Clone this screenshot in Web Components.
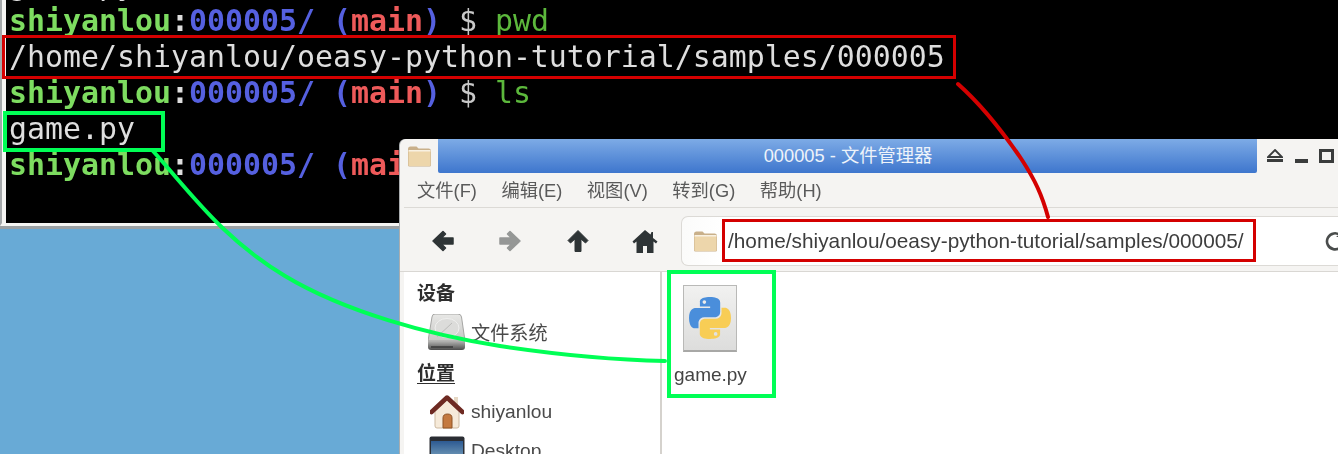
<!DOCTYPE html>
<html lang="zh">
<head>
<meta charset="utf-8">
<title>000005</title>
<style>
  html, body { margin: 0; height: 100%; overflow: hidden; }
  body { background: #68aad6; font-family: "Liberation Sans", "Noto Sans CJK SC", sans-serif; }
</style>
</head>
<body>
<desktop-screen>
  <terminal-window>
    <term-line plain>game.py</term-line>
    <term-line cmd="pwd"></term-line>
    <term-line plain>/home/shiyanlou/oeasy-python-tutorial/samples/000005</term-line>
    <term-line cmd="ls"></term-line>
    <term-line plain>game.py</term-line>
    <term-line></term-line>
  </terminal-window>

  <file-manager>
    <fm-section>设备</fm-section>
    <fm-place icon="drive">文件系统</fm-place>
    <fm-section underline>位置</fm-section>
    <fm-place icon="home">shiyanlou</fm-place>
    <fm-place icon="desktop">Desktop</fm-place>
    <fm-file slot="files">game.py</fm-file>
  </file-manager>

  <note-layer></note-layer>
</desktop-screen>

<script>
const ICONS = {
  folder: `<svg viewBox="0 0 25 21" width="25" height="21"><path d="M1 3Q1 .5 3.500 .5h6l2 2h10q2.500 0 2.500 2.500V19q0 1.500-1.500 1.500H2.500Q1 20.500 1 19z" fill="#c9b08a"/><path d="M1.500 5h22v14q0 1-1 1h-20q-1 0-1-1z" fill="#edd6ab"/><path d="M1.500 4h22v1.500h-22z" fill="#f8f1e2"/></svg>`,
  back: `<svg viewBox="0 0 24 24" width="24" height="24"><path d="M12 2.500 2 12l10 9.500 2.500-2.500-4-4H22V9H10.500l4-4z" fill="#2e3436" stroke="#2e3436" stroke-width="1.500" stroke-linejoin="round"/></svg>`,
  forward: `<svg viewBox="0 0 24 24" width="24" height="24"><path d="M12 2.500 22 12l-10 9.500-2.500-2.500 4-4H2V9h11.500l-4-4z" fill="#959796" stroke="#959796" stroke-width="1.500" stroke-linejoin="round"/></svg>`,
  up: `<svg viewBox="0 0 24 24" width="24" height="24"><path d="M12 1.500 2 11.500 4.500 14l4.500-4V22.500h6V10l4.500 4 2.500-2.500z" fill="#2e3436" stroke="#2e3436" stroke-linejoin="round"/></svg>`,
  house: `<svg viewBox="0 0 26 24" width="26" height="24"><path d="M13 1 0.500 12.500 2 14.500l2.500-2V24h6.500v-7h4v7h6.500V12.500l2.500 2 1.500-2L21 9V3h-1.500L18.500 5.500z" fill="#2e3436"/></svg>`,
  reload: `<svg viewBox="0 0 20 20" width="20" height="20"><path d="M15.500 4.500A8 8 0 1 0 18 10" fill="none" stroke="#4a4d4c" stroke-width="2.600"/><path d="M11 6h8V0z" fill="#4a4d4c"/></svg>`,
  drive: `<svg viewBox="0 0 37 36" width="37" height="36"><defs><linearGradient id="d" x1="0" y1="0" x2="0" y2="1"><stop offset="0" stop-color="#e8e8e6"/><stop offset="1" stop-color="#c8c8c6"/></linearGradient><linearGradient id="b" x1="0" y1="0" x2="0" y2="1"><stop offset="0" stop-color="#b5b5b3"/><stop offset="1" stop-color="#4c4c4c"/></linearGradient></defs><path d="M4 3q.3-3 3-3h23q3 0 3.500 3L37 27H0z" fill="url(#d)" stroke="#a5a5a3"/><ellipse cx="19" cy="14" rx="12" ry="9.500" fill="#dcdcda" stroke="#f0f0ef"/><path d="M9 23 24 9" stroke="#bbbbb9" fill="none"/><path d="M0 27h37v6q0 3-3 3H3q-3 0-3-3z" fill="url(#b)"/><path d="M3 33h22" stroke="#3a3a3a" stroke-width="1.500"/></svg>`,
  home: `<svg viewBox="0 0 34 34" width="34" height="34"><path d="M5 16 17 5l12 11v15q0 2-2 2H7q-2 0-2-2z" fill="#f6ead9" stroke="#cdb9a0"/><path d="M24 2h4v10h-4z" fill="#e6d8c4"/><path d="M1.500 17 17 2.500 32.500 17" fill="none" stroke="#6e2a22" stroke-width="4.500" stroke-linecap="round" stroke-linejoin="round"/><path d="M13 33V23q0-4 4.500-4t4.500 4v10z" fill="#c4793f" stroke="#8f5427"/></svg>`,
  monitor: `<svg viewBox="0 0 36 30" width="36" height="30"><defs><linearGradient id="m" x1="0" y1="0" x2="0" y2="1"><stop offset="0" stop-color="#2d5a92"/><stop offset="1" stop-color="#8fb6c8"/></linearGradient></defs><rect x=".5" y=".5" width="35" height="29" rx="2" fill="#2a2d33"/><rect x="2" y="5" width="32" height="24" fill="url(#m)"/></svg>`,
  python: `<svg viewBox="0 0 110 110" width="42" height="42"><path fill-rule="evenodd" fill="#4a8edb" d="M54.900 0C26.800 0 28.600 12.200 28.600 12.200l0 12.600h26.800v3.800H17.900S0 26.600 0 54.800c0 28.200 15.600 27.200 15.600 27.200h9.300V68.900s-.5-15.600 15.400-15.600h26.500s14.900.2 14.900-14.400V14.700S84 0 54.900 0zM40.200 8.500a4.800 4.800 0 1 1 0 9.600 4.800 4.800 0 0 1 0-9.600z"/><path fill-rule="evenodd" fill="#f8cd55" transform="rotate(180 55 55)" d="M54.900 0C26.800 0 28.600 12.200 28.600 12.200l0 12.600h26.800v3.800H17.900S0 26.600 0 54.800c0 28.200 15.600 27.200 15.600 27.200h9.300V68.900s-.5-15.600 15.400-15.600h26.500s14.900.2 14.900-14.400V14.700S84 0 54.900 0zM40.200 8.500a4.800 4.800 0 1 1 0 9.600 4.800 4.800 0 0 1 0-9.600z"/></svg>`,
};

class BaseElement extends HTMLElement {
  constructor(html) {
    super();
    const template = document.createElement("template");
    template.innerHTML = html;
    this.attachShadow({ mode: "open" }).appendChild(template.content.cloneNode(true));
  }
}

class DesktopScreen extends BaseElement {
  constructor() {
    super(`
<style>
  :host { display: block; position: relative; width: 1338px; height: 454px; overflow: hidden; background: #68aad6; }
</style>
<slot></slot>`);
  }
}

class TerminalWindow extends BaseElement {
  constructor() {
    super(`
<style>
  :host {
    display: block; position: absolute; left: 0; top: -36px; width: 1338px; height: 262px;
    box-sizing: border-box; background: #000; padding: 3px 0 0 7px;
    border-left: 2px solid #a4a8aa; border-bottom: 3px solid #f4f4f2;
    box-shadow: inset 4px 0 0 #f4f4f2, 0 3px 0 #9aa0a3;
    filter: blur(.5px);
  }
</style>
<slot></slot>`);
  }
}

class TermLine extends BaseElement {
  constructor() {
    super(`
<style>
  :host {
    display: block; height: 36px; overflow: hidden;
    font: 29.9px/36px "DejaVu Sans Mono", monospace; color: #dedede;
  }
  #out { white-space: pre; }
  .user { color: #7ddc60; font-weight: bold; }
  .dir { color: #5560e0; font-weight: bold; }
  .branch { color: #ee5a5a; font-weight: bold; }
  .paren { color: #5560e0; font-weight: bold; }
  .cmd { color: #5cb83c; }
  .sign { color: #c8c8c8; }
  .colon { color: #dedede; font-weight: bold; }
</style>
<span id="out"></span>`);
  }
  connectedCallback() {
    const out = this.shadowRoot.getElementById("out");
    if (this.hasAttribute("plain")) {
      out.textContent = this.textContent;
      return;
    }
    const cmd = this.getAttribute("cmd");
    out.innerHTML = `<span class="user">shiyanlou</span><span class="colon">:</span><span class="dir">000005/</span> <span class="paren">(</span><span class="branch">main</span><span class="paren">)</span> <span class="sign">$</span> ${cmd ? `<span class="cmd">${cmd}</span>` : ""}`;
  }
}

class FileManager extends BaseElement {
  constructor() {
    super(`
<style>
  :host {
    display: flex; flex-direction: column; position: absolute; left: 400px; top: 139px;
    width: 960px; height: 330px; background: #f5f4f2; border-radius: 6px 0 0 0;
    color: #4a4a4a; filter: blur(.45px); box-shadow: -1px 0 0 #a9adaf;
  }
  .title { display: flex; height: 34px; flex: none; }
  .appicon { width: 38px; display: flex; align-items: center; padding-left: 7px; box-sizing: border-box; }
  .caption {
    width: 819px; display: flex; align-items: center; justify-content: center; padding: 0 0 4px 1px; box-sizing: border-box;
    background: linear-gradient(#7dabe6, #3e76cd); border-radius: 0 0 2px 2px;
    color: #eef3fa; font: 18.3px "Liberation Sans", "Noto Sans CJK SC", sans-serif;
  }
  .controls { display: flex; align-items: center; gap: 10px; padding: 0 0 1px 10px; }
  .menu {
    display: flex; gap: 24.500px; height: 35px; align-items: center; flex: none;
    margin-left: 4px; padding: 0 0 3px 13px; box-sizing: border-box; border-bottom: 1px solid #dcdad6;
    font: 18.3px "Liberation Sans", "Noto Sans CJK SC", sans-serif; color: #5a5a5a;
  }
  .tools { display: flex; flex: none; height: 64px; box-sizing: border-box; padding: 8px 0 5px 9px; border-bottom: 1px solid #d9d7d3; }
  .btn { width: 67.500px; display: flex; align-items: center; justify-content: center; }
  .location {
    flex: 1; margin-left: 2px; background: linear-gradient(90deg, #fbfbfa 0, #fff 40px); border: 1px solid #dcdad6; border-right: 0;
    border-radius: 7px 0 0 7px; display: flex; align-items: center; padding-left: 11px; gap: 10px;
    font: 20.800px "Liberation Sans", sans-serif; color: #3d3d3d; white-space: nowrap;
  }
  .location .path { width: 587px; }
  .body { display: flex; flex: 1; min-height: 0; }
  .side { width: 256px; flex: none; margin-left: 4px; background: #fff; border-right: 2px solid #d5d2cd; overflow: hidden; }
  .files { flex: 1; background: #fff; padding: 13px 0 0 12px; display: flex; align-items: flex-start; }
</style>
<div class="title">
  <div class="appicon">${ICONS.folder}</div>
  <div class="caption">000005 - 文件管理器</div>
  <div class="controls">
    <svg width="16" height="14" viewBox="0 0 16 14"><path d="M8 1 15 8H1z" fill="none" stroke="#3a3c3c" stroke-width="1.800"/><path d="M0 11.500h16" stroke="#3a3c3c" stroke-width="3"/></svg>
    <svg width="15" height="14" viewBox="0 0 15 14" style="margin-left:1px"><path d="M1 12h13" stroke="#3a3c3c" stroke-width="4"/></svg>
    <svg width="15" height="14" viewBox="0 0 15 14"><rect x="1.500" y="1.500" width="12" height="11" fill="#f3f3f1" stroke="#3a3c3c" stroke-width="3"/></svg>
  </div>
</div>
<div class="menu"><span>文件(F)</span><span>编辑(E)</span><span>视图(V)</span><span>转到(G)</span><span>帮助(H)</span></div>
<div class="tools">
  <div class="btn">${ICONS.back}</div>
  <div class="btn">${ICONS.forward}</div>
  <div class="btn">${ICONS.up}</div>
  <div class="btn">${ICONS.house}</div>
  <div class="location">
    ${ICONS.folder}
    <span class="path">/home/shiyanlou/oeasy-python-tutorial/samples/000005/</span>
    ${ICONS.reload}
  </div>
</div>
<div class="body">
  <div class="side"><slot></slot></div>
  <div class="files"><slot name="files"></slot></div>
</div>`);
  }
}

class FmSection extends BaseElement {
  constructor() {
    super(`
<style>
  :host { display: block; height: 39px; padding-left: 13px; margin-top: 1px; font: bold 19px/37px "Noto Sans CJK SC", "Liberation Sans", sans-serif; color: #2e2e2e; }
  :host([underline]) { text-decoration: underline; text-underline-offset: 3px; margin-top: 2px; }
</style>
<slot></slot>`);
  }
}

class FmPlace extends BaseElement {
  constructor() {
    super(`
<style>
  :host { display: flex; align-items: center; height: 39px; padding-left: 24px; gap: 6px; font: 19.200px "Liberation Sans", "Noto Sans CJK SC", sans-serif; color: #4a4a4a; white-space: nowrap; }
  .ico { width: 37px; display: flex; justify-content: center; flex: none; }
</style>
<span class="ico" id="ico"></span><slot></slot>`);
  }
  connectedCallback() {
    const map = { drive: ICONS.drive, home: ICONS.home, desktop: ICONS.monitor };
    this.shadowRoot.getElementById("ico").innerHTML = map[this.getAttribute("icon")];
  }
}

class FmFile extends BaseElement {
  constructor() {
    super(`
<style>
  :host { display: flex; flex-direction: column; align-items: center; gap: 12px; font: 19px "Liberation Sans", sans-serif; color: #444; }
  .doc {
    width: 54px; height: 67px; box-sizing: border-box; border: 1px solid #b9b9b7; border-bottom: 2px solid #a8a8a6;
    background: linear-gradient(#f1f1f0, #dddddc); display: flex; align-items: center; justify-content: center;
  }
  .doc svg { margin-top: -1px; }
</style>
<div class="doc">${ICONS.python}</div>
<slot></slot>`);
  }
}

class MarkBox extends BaseElement {
  constructor() {
    super(`
<style>
  :host { display: block; position: absolute; box-sizing: border-box; border: 4px solid var(--mark, #d40000); }
</style>`);
  }
}

class NoteLayer extends BaseElement {
  constructor() {
    super(`
<style>
  :host { display: block; position: absolute; inset: 0; pointer-events: none; }
  svg { position: absolute; inset: 0; }
  .r { --mark: #d40000; }
  .g { --mark: #00ff55; }
</style>
<svg width="1338" height="454" fill="none" stroke-linecap="round">
  <path d="M958 84C985 108 1005 135 1022 160C1035 180 1042 195 1048 217" stroke="#d40000" stroke-width="4"/>
  <path d="M153 151C190 192 222 238 285 276C345 312 430 335 500 346C560 355 620 360 665 361" stroke="#00ff55" stroke-width="4"/>
</svg>
<mark-box class="r" style="left:2px;top:35px;width:954px;height:44px;border-width:3px"></mark-box>
<mark-box class="g" style="left:3px;top:111px;width:162px;height:41px"></mark-box>
<mark-box class="r" style="left:722px;top:219px;width:534px;height:43px;border-width:3.500px"></mark-box>
<mark-box class="g" style="left:667px;top:270px;width:109px;height:128px"></mark-box>`);
  }
}

customElements.define("mark-box", MarkBox);
customElements.define("note-layer", NoteLayer);
customElements.define("fm-file", FmFile);
customElements.define("fm-place", FmPlace);
customElements.define("fm-section", FmSection);
customElements.define("file-manager", FileManager);
customElements.define("term-line", TermLine);
customElements.define("terminal-window", TerminalWindow);
customElements.define("desktop-screen", DesktopScreen);
</script>
</body>
</html>
